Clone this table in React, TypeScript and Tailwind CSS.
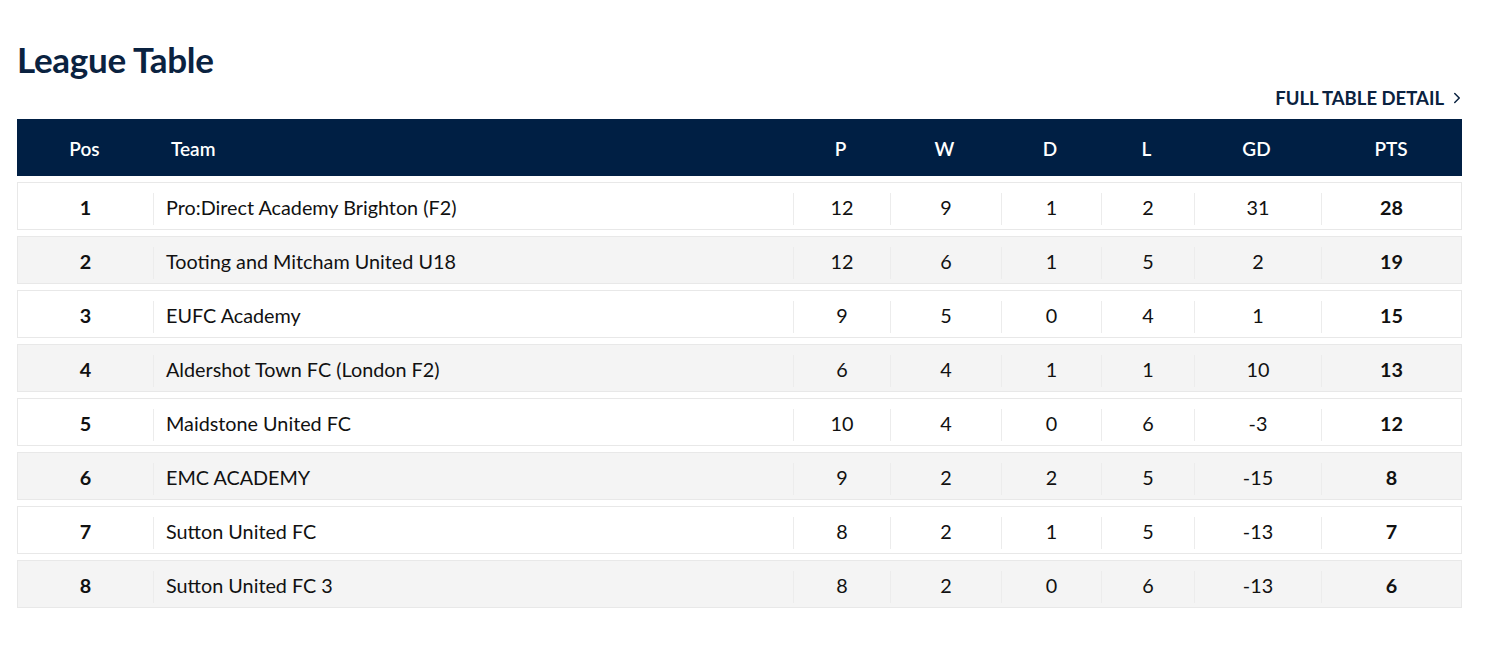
import { ChevronRight } from 'lucide-react'

type Row = {
    pos: number
    team: string
    p: number
    w: number
    d: number
    l: number
    gd: number
    pts: number
}

const rows: Row[] = [
    { pos: 1, team: 'Pro:Direct Academy Brighton (F2)', p: 12, w: 9, d: 1, l: 2, gd: 31, pts: 28 },
    { pos: 2, team: 'Tooting and Mitcham United U18', p: 12, w: 6, d: 1, l: 5, gd: 2, pts: 19 },
    { pos: 3, team: 'EUFC Academy', p: 9, w: 5, d: 0, l: 4, gd: 1, pts: 15 },
    { pos: 4, team: 'Aldershot Town FC (London F2)', p: 6, w: 4, d: 1, l: 1, gd: 10, pts: 13 },
    { pos: 5, team: 'Maidstone United FC', p: 10, w: 4, d: 0, l: 6, gd: -3, pts: 12 },
    { pos: 6, team: 'EMC ACADEMY', p: 9, w: 2, d: 2, l: 5, gd: -15, pts: 8 },
    { pos: 7, team: 'Sutton United FC', p: 8, w: 2, d: 1, l: 5, gd: -13, pts: 7 },
    { pos: 8, team: 'Sutton United FC 3', p: 8, w: 2, d: 0, l: 6, gd: -13, pts: 6 },
]

const cols = 'grid grid-cols-[135px_640px_97px_111px_100px_93px_127px_1fr]'

function Cell({ children, bold }: { children: React.ReactNode; bold?: boolean }) {
    return (
        <div className="flex items-center h-full py-[10px]">
            <div
                className={
                    'flex-1 h-full flex items-center justify-center pb-[2px] border-l border-[#ececec] ' +
                    (bold ? 'font-bold' : '')
                }
            >
                {children}
            </div>
        </div>
    )
}

export default function App() {
    return (
        <div className="bg-white min-h-[651px] pl-[17px] pt-[36px] font-['Lato',sans-serif]">
            <div className="w-[1445px]">
                <h1 className="text-[35px] leading-[46px] font-bold text-[#0a2240] tracking-[-0.3px]">League Table</h1>

                <div className="flex justify-end mt-[3px]">
                    <a href="#" className="flex items-center gap-[4px] text-[18.5px] font-bold text-[#0a2240] leading-[24px] pt-[1px]">
                        FULL TABLE DETAIL
                        <ChevronRight className="w-[18px] h-[18px] -mr-[4px]" strokeWidth={2} />
                    </a>
                </div>

                <div className={cols + ' mt-[9px] h-[57px] bg-[#001f44] text-white text-[19px] font-semibold items-center pt-[3px]'}>
                    <div className="text-center">Pos</div>
                    <div className="pl-[19px]">Team</div>
                    <div className="text-center">P</div>
                    <div className="text-center">W</div>
                    <div className="text-center">D</div>
                    <div className="text-center">L</div>
                    <div className="text-center">GD</div>
                    <div className="text-center">PTS</div>
                </div>

                <div className="flex flex-col gap-[6px] mt-[6px]">
                    {rows.map((r, i) => (
                        <div
                            key={r.pos}
                            className={
                                cols +
                                ' h-[48px] border border-[#e8e8e8] text-[19.8px] text-[#111] ' +
                                (i % 2 === 1 ? 'bg-[#f4f4f4]' : 'bg-white')
                            }
                        >
                            <div className="flex items-center justify-center font-bold pb-[2px]">{r.pos}</div>
                            <div className="flex items-center py-[10px]">
                                <div className="h-full flex items-center border-l border-[#ececec] pl-[12px] pb-[2px]">{r.team}</div>
                            </div>
                            <Cell>{r.p}</Cell>
                            <Cell>{r.w}</Cell>
                            <Cell>{r.d}</Cell>
                            <Cell>{r.l}</Cell>
                            <Cell>{r.gd}</Cell>
                            <Cell bold>{r.pts}</Cell>
                        </div>
                    ))}
                </div>
            </div>
        </div>
    )
}
